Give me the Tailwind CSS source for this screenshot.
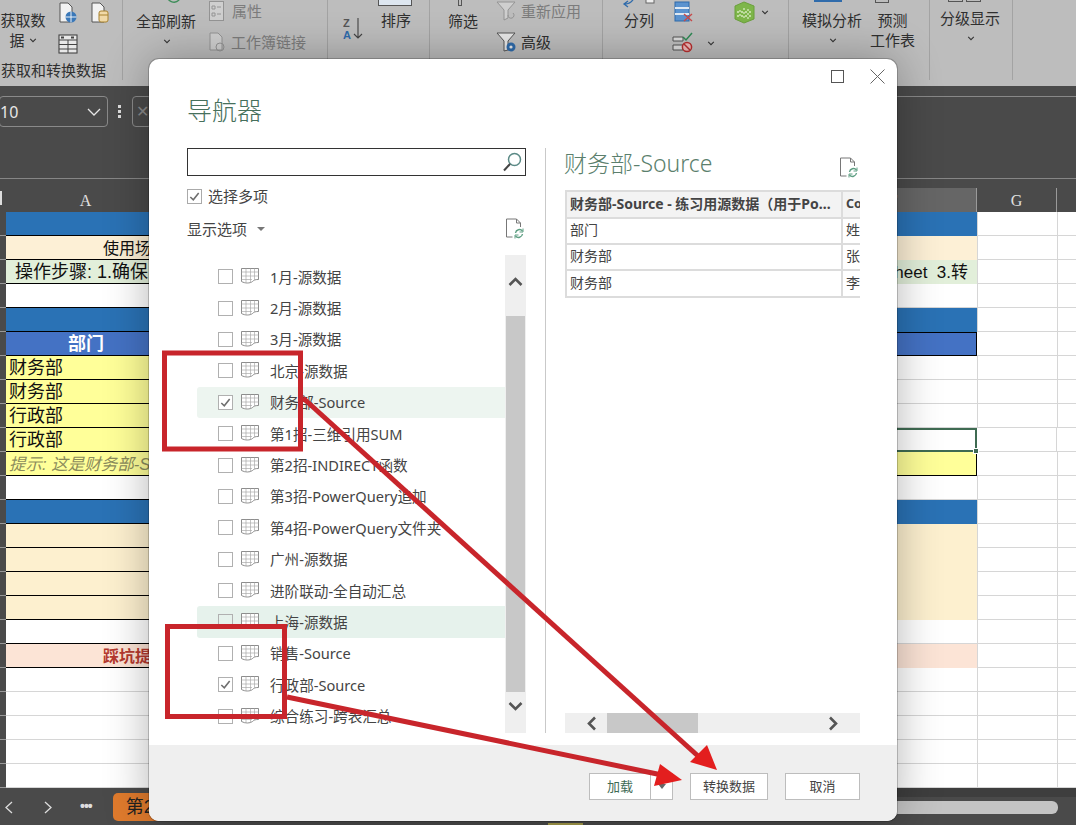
<!DOCTYPE html>
<html lang="zh-CN">
<head>
<meta charset="utf-8">
<title>导航器</title>
<script src="https://cdn.jsdelivr.net/npm/@tailwindcss/browser@4"></script>
</head>
<body class="m-0">
<svg width="0" height="0" class="absolute">
  <defs>
    <symbol id="chev" viewBox="0 0 10 6"><path d="M1.5 1 L5 4.5 L8.5 1" fill="none" stroke="#333" stroke-width="1.3"/></symbol>
    <symbol id="sheet" viewBox="0 0 18 17"><path d="M.5 .5H17.5V11.5C14 11.5 13 12 11.5 13.5C9 15.5 4 15.5 .5 13.5Z" fill="#fff" stroke="#808080" stroke-width=".9"/><path d="M.5 4H17.5M.5 8H17.5M.5 11.5H11M5 .5V14.5M9.5 .5V14.5M13.5 .5V12" fill="none" stroke="#aaa" stroke-width=".7"/></symbol>
    <symbol id="refdoc" viewBox="0 0 20 22"><path d="M12 1H2V19H8M12 1L16 5V9M12 1V5H16" fill="none" stroke="#777" stroke-width="1"/><path d="M11 15a4 4 0 0 1 7-2M18 16a4 4 0 0 1-7 2" fill="none" stroke="#5f9f83" stroke-width="1.4"/><path d="M18.5 10.5V14H15M10.5 20.5V17H14" fill="none" stroke="#5f9f83" stroke-width="1"/></symbol>
    <symbol id="check" viewBox="0 0 14 14"><path d="M2.5 7.5 L5.7 10.5 L11.5 3.2" fill="none" stroke="#6e6e6e" stroke-width="1.7"/></symbol>
    <symbol id="table" viewBox="0 0 20 20"><rect x="1" y="1" width="18" height="18" fill="#e8e8e8" stroke="#444" stroke-width="1.1"/><path d="M1 6H19M1 10.5H19M1 15H19M10 6V19" stroke="#444" stroke-width="1"/><rect x="3" y="2.5" width="3" height="2" fill="#444"/><rect x="13" y="2.5" width="3" height="2" fill="#444"/></symbol>
  </defs>
</svg>

<div class="relative w-[1076px] h-[825px] overflow-hidden bg-[#4a4a4a] font-['Liberation_Sans','Noto_Sans_CJK_SC',sans-serif]">

  <!-- Ribbon -->
  <div class="flex h-[86px] bg-[#bdbdbd] text-[15px] leading-[20px] text-[#2f2f2f] font-['Noto_Sans_CJK_SC',sans-serif] overflow-hidden">
    <div class="w-[123px] h-[80px] shrink-0 border-r border-[#a3a3a3] flex flex-col">
      <div class="flex h-[62px]">
        <div class="w-[46px] pt-[10px] text-center">
          <div class="whitespace-nowrap">获取数</div>
          <div class="flex items-center justify-center gap-1">据<svg class="w-[8px] h-[5px]"><use href="#chev"/></svg></div>
        </div>
        <div class="ml-[12px] pt-[2px] grid grid-cols-[20px_20px] gap-x-[12px] gap-y-[10px] content-start">
          <svg class="w-[20px] h-[22px]" viewBox="0 0 20 22"><path d="M2 1H10L14 5V20H2Z" fill="#f2f2f2" stroke="#555"/><circle cx="13" cy="15" r="5.5" fill="#3b78b8"/><path d="M7.5 15H18.5M13 9.5V20.5" stroke="#fff" stroke-width=".9"/></svg>
          <svg class="w-[20px] h-[22px]" viewBox="0 0 20 22"><path d="M2 1H10L14 5V20H2Z" fill="#f2f2f2" stroke="#555"/><rect x="9" y="9" width="9" height="11" rx="2" fill="#f0d9a8" stroke="#a8822f"/><path d="M9 13H18" stroke="#a8822f"/></svg>
          <svg class="w-[20px] h-[20px]"><use href="#table"/></svg>
        </div>
      </div>
      <div class="pl-[1px] whitespace-nowrap">获取和转换数据</div>
    </div>

    <div class="w-[205px] h-[80px] shrink-0 border-r border-[#a3a3a3] flex">
      <div class="w-[73px] pl-[13px] relative pt-[11px]">
        <svg class="absolute left-[30px] -top-[6px] w-[34px] h-[14px]" viewBox="0 0 34 14"><path d="M12 0V5H6V0" fill="none" stroke="#666"/><path d="M14 1a7 7 0 0 0 12 5M26 6L28 1" fill="none" stroke="#3e8e5a" stroke-width="1.4"/></svg>
        <div class="whitespace-nowrap">全部刷新</div>
        <svg class="w-[8px] h-[5px] mt-[8px] ml-[27px]"><use href="#chev"/></svg>
      </div>
      <div class="pl-[13px] text-[#7c7c7c]">
        <div class="flex items-center gap-[8px] h-[22px]">
          <svg class="w-[15px] h-[20px]" viewBox="0 0 15 20"><rect x=".5" y=".5" width="14" height="19" fill="#cfcfcf" stroke="#949494"/><path d="M3 5H6V8H3ZM3 12H6V15H3ZM8 6H12M8 13H12" stroke="#949494" fill="none"/></svg>
          <span>属性</span>
        </div>
        <div class="flex items-center gap-[4px] h-[20px] mt-[10px] whitespace-nowrap">
          <svg class="w-[18px] h-[20px]" viewBox="0 0 18 20"><path d="M1 1H9L13 5V18H1Z" fill="#cfcfcf" stroke="#949494"/><circle cx="11" cy="15" r="4" fill="none" stroke="#949494"/></svg>
          <span>工作簿链接</span>
        </div>
      </div>
    </div>

    <div class="w-[102px] h-[80px] shrink-0 border-r border-[#a3a3a3] flex">
      <div class="pl-[15px] pt-[17px] w-[53px]">
        <svg class="w-[22px] h-[24px]" viewBox="0 0 22 24">
          <text x="0" y="10" font-size="11" font-weight="700" fill="#555" font-family="Liberation Sans">Z</text>
          <text x="0" y="22" font-size="11" font-weight="700" fill="#2f6bab" font-family="Liberation Sans">A</text>
          <path d="M15 1V21M11 17L15 21L19 17" fill="none" stroke="#444" stroke-width="1.1"/>
        </svg>
      </div>
      <div class="relative pt-[10px]">
        <div class="absolute -top-[5px] -left-[3px] w-[34px] h-[11px] border border-[#555] bg-[#dde6f0]"></div>
        <div class="whitespace-nowrap">排序</div>
      </div>
    </div>

    <div class="w-[173px] h-[80px] shrink-0 border-r border-[#a3a3a3] flex">
      <div class="pl-[18px] pt-[11px] w-[66px] relative">
        <div class="absolute left-[28px] -top-[4px] w-[4px] h-[10px] border border-[#555]"></div>
        <div class="whitespace-nowrap">筛选</div>
      </div>
      <div class="text-[#7c7c7c]">
        <div class="flex items-center h-[22px] gap-[5px] whitespace-nowrap">
          <svg class="w-[20px] h-[22px]" viewBox="0 0 20 22"><path d="M1 2H19L12 10V18L8 20V10Z" fill="#cfcfcf" stroke="#949494"/><path d="M12 15a3 3 0 1 0 5-2" fill="none" stroke="#949494"/></svg>
          <span>重新应用</span>
        </div>
        <div class="flex items-center h-[22px] mt-[9px] gap-[5px] text-[#2f2f2f]">
          <svg class="w-[20px] h-[22px]" viewBox="0 0 20 22"><path d="M1 2H19L12 10V19L8 20V10Z" fill="#e8e8e8" stroke="#555"/><circle cx="15" cy="16" r="4.5" fill="#2f6bab"/><circle cx="15" cy="16" r="1.6" fill="#e8e8e8"/></svg>
          <span>高级</span>
        </div>
      </div>
    </div>

    <div class="w-[186px] h-[80px] shrink-0 border-r border-[#a3a3a3] flex">
      <div class="pl-[21px] pt-[10px] w-[71px] relative">
        <svg class="absolute left-[17px] -top-[2px] w-[38px] h-[12px]" viewBox="0 0 38 12"><path d="M14 0C12 4 10 6 5 6M8 3L4 6L8 9" fill="none" stroke="#2f6bab" stroke-width="1.3"/><rect x="26" y="-4" width="8" height="9" fill="#eee" stroke="#666"/></svg>
        <div class="whitespace-nowrap">分列</div>
      </div>
      <div class="pt-[1px] w-[60px]">
        <svg class="w-[20px] h-[22px]" viewBox="0 0 20 22"><rect x="1" y="1" width="14" height="19" fill="#5b93cf" stroke="#2f6bab"/><path d="M1 7H15M1 13H15" stroke="#dfe9f3" stroke-width="2"/><path d="M10 13L18 20M18 13L10 20" stroke="#c84a4a" stroke-width="1.4"/></svg>
        <div class="flex items-center mt-[9px] -ml-[2px] gap-[13px]">
          <svg class="w-[22px] h-[22px] shrink-0" viewBox="0 0 22 22"><path d="M1 5H11V9H1ZM1 13H11V18H1Z" fill="#ddd" stroke="#555"/><path d="M11 5L14 8L20 1" fill="none" stroke="#2f8a55" stroke-width="1.5"/><circle cx="15" cy="15" r="4.6" fill="#f0b9b9" stroke="#b83030" stroke-width="1.5"/><path d="M12 12L18 18" stroke="#b83030" stroke-width="1.5"/></svg>
          <svg class="w-[8px] h-[5px] shrink-0"><use href="#chev"/></svg>
        </div>
      </div>
      <div class="pt-[1px] flex items-start gap-[6px]">
        <svg class="w-[21px] h-[23px] shrink-0" viewBox="0 0 21 23"><path d="M1 5L10 1L20 5V18L10 22L1 18Z" fill="#7eb64a" stroke="#6ba03c"/><path d="M10 7V19M14 8V18M6 9V16M3 11H18M3 15H18" stroke="#d7eabf" stroke-width="1.3" stroke-dasharray="2 2"/></svg>
        <svg class="w-[8px] h-[5px] mt-[9px] shrink-0"><use href="#chev"/></svg>
      </div>
    </div>

    <div class="w-[141px] h-[80px] shrink-0 border-r border-[#a3a3a3] flex">
      <div class="pl-[13px] pt-[10px] w-[81px] relative">
        <div class="absolute left-[25px] -top-[2px] w-[28px] h-[4px] bg-[#2f6bab]"></div>
        <div class="whitespace-nowrap">模拟分析</div>
        <svg class="w-[8px] h-[5px] mt-[8px] ml-[27px]"><use href="#chev"/></svg>
      </div>
      <div class="text-center pt-[10px] w-[45px] relative">
        <div class="absolute left-[5px] -top-[5px] w-[14px] h-[8px] border border-[#555]"></div>
        <div>预测</div>
        <div class="whitespace-nowrap">工作表</div>
      </div>
    </div>

    <div class="w-[83px] h-[80px] shrink-0 border-r border-[#a3a3a3] relative">
      <div class="absolute left-[18px] -top-[5px] flex gap-[3px]"><div class="w-[15px] h-[7px] border border-[#555]"></div><div class="w-[15px] h-[7px] border border-[#555]"></div></div>
      <div class="pl-[10px] pt-[8px] whitespace-nowrap">分级显示</div>
      <svg class="w-[8px] h-[5px] mt-[8px] ml-[37px]"><use href="#chev"/></svg>
    </div>
  </div>

  <!-- Formula bar -->
  <div class="h-[102px] pt-[10px] relative">
    <div class="flex items-center h-[31px]">
      <div class="w-[109px] h-[31px] -ml-[1px] flex items-center justify-between pr-[6px] border border-[#8a8a8a] rounded-[4px] text-[#e6e6e6] text-[16px] font-['Noto_Sans',sans-serif]">
        <span>10</span>
        <svg class="w-[14px] h-[8px]" viewBox="0 0 14 8"><path d="M1 1L7 7L13 1" fill="none" stroke="#e6e6e6" stroke-width="1.3"/></svg>
      </div>
      <div class="ml-[10px] flex flex-col gap-[2px]"><i class="w-[3px] h-[3px] bg-[#ddd]"></i><i class="w-[3px] h-[3px] bg-[#ddd]"></i><i class="w-[3px] h-[3px] bg-[#ddd]"></i></div>
      <div class="ml-[11px] w-[20px] h-[31px] border border-[#8a8a8a] rounded-[4px] flex items-center justify-center text-[#8a8a8a]">✕</div>
      <div class="ml-[742px] flex-1 h-[31px] border-t border-[#888]"></div>
    </div>
    <div class="mt-[51px] h-[1px] bg-[#868686]"></div>
  </div>

  <!-- Column headers -->
  <div class="flex h-[24px] text-[#e0e0e0] text-[16px] font-['Liberation_Serif',serif]">
    <div class="w-[6px] h-[24px] bg-[#4a4a4a] relative"><div class="absolute left-0 top-[3px] w-[2px] h-[14px] bg-[#ddd]"></div></div>
    <div class="w-[160px] text-center border-r border-[#777] leading-[26px]">A</div>
    <div class="w-[644px]"></div>
    <div class="w-[167px] bg-[#666] border-r border-[#9a9a9a] text-center leading-[26px]">F</div>
    <div class="w-[80px] border-r border-[#9a9a9a] text-center leading-[26px]">G</div>
    <div class="flex-1"></div>
  </div>

  <!-- Grid -->
  <div class="bg-white text-[16px] leading-[25px] text-[#111]">
    <div class="flex h-[24px]"><div class="w-[6px] bg-[#4a4a4a] border-b border-[#999]"></div><div class="w-[400px] bg-[#2a72b5] border-b border-black"></div><div class="w-[571px] bg-[#2a72b5]"></div><div class="w-[80px] border-l border-b border-[#d6d6d6]"></div><div class="flex-1 border-l border-b border-[#d6d6d6]"></div></div>

    <div class="flex h-[24px]"><div class="w-[6px] bg-[#4a4a4a] border-b border-[#999]"></div><div class="w-[400px] bg-[#fdf0d6] border-b border-black pl-[97px] whitespace-nowrap overflow-hidden">使用场景</div><div class="w-[571px] bg-[#fdf0d6]"></div><div class="w-[80px] border-l border-b border-[#d6d6d6]"></div><div class="flex-1 border-l border-b border-[#d6d6d6]"></div></div>

    <div class="flex h-[24px]"><div class="w-[6px] bg-[#4a4a4a] border-b border-[#999]"></div><div class="w-[400px] bg-[#e2efda] border-b border-black pl-[9px] text-[18px] whitespace-nowrap overflow-hidden">操作步骤: 1.确保</div><div class="w-[571px] bg-[#e2efda] text-right pr-[9px] text-[17px] whitespace-pre">Sheet  3.转</div><div class="w-[80px] border-l border-b border-[#d6d6d6]"></div><div class="flex-1 border-l border-b border-[#d6d6d6]"></div></div>

    <div class="flex h-[24px]"><div class="w-[6px] bg-[#4a4a4a] border-b border-[#999]"></div><div class="w-[400px] border-b border-black"></div><div class="w-[571px] border-b border-[#d6d6d6]"></div><div class="w-[80px] border-l border-b border-[#d6d6d6]"></div><div class="flex-1 border-l border-b border-[#d6d6d6]"></div></div>

    <div class="flex h-[24px]"><div class="w-[6px] bg-[#4a4a4a] border-b border-[#999]"></div><div class="w-[400px] bg-[#2a72b5] border-b border-black"></div><div class="w-[571px] bg-[#2a72b5]"></div><div class="w-[80px] border-l border-b border-[#d6d6d6]"></div><div class="flex-1 border-l border-b border-[#d6d6d6]"></div></div>

    <div class="flex h-[24px]"><div class="w-[6px] bg-[#4a4a4a] border-b border-[#999]"></div><div class="w-[400px] bg-[#4472c4] border-b border-black text-white text-[18px] font-bold pl-[62px]">部门</div><div class="w-[571px] bg-[#4472c4] border-y border-r border-black"></div><div class="w-[80px] border-b border-[#d6d6d6]"></div><div class="flex-1 border-l border-b border-[#d6d6d6]"></div></div>

    <div class="flex h-[24px]"><div class="w-[6px] bg-[#4a4a4a] border-b border-[#999]"></div><div class="w-[400px] bg-[#ffff99] border-b border-black pl-[3px] text-[18px]">财务部</div><div class="w-[571px] border-b border-[#d6d6d6]"></div><div class="w-[80px] border-l border-b border-[#d6d6d6]"></div><div class="flex-1 border-l border-b border-[#d6d6d6]"></div></div>

    <div class="flex h-[24px]"><div class="w-[6px] bg-[#4a4a4a] border-b border-[#999]"></div><div class="w-[400px] bg-[#ffff99] border-b border-black pl-[3px] text-[18px]">财务部</div><div class="w-[571px] border-b border-[#d6d6d6]"></div><div class="w-[80px] border-l border-b border-[#d6d6d6]"></div><div class="flex-1 border-l border-b border-[#d6d6d6]"></div></div>

    <div class="flex h-[24px]"><div class="w-[6px] bg-[#4a4a4a] border-b border-[#999]"></div><div class="w-[400px] bg-[#ffff99] border-b border-black pl-[3px] text-[18px]">行政部</div><div class="w-[571px] border-b border-[#d6d6d6]"></div><div class="w-[80px] border-l border-b border-[#d6d6d6]"></div><div class="flex-1 border-l border-b border-[#d6d6d6]"></div></div>

    <div class="flex h-[24px]"><div class="w-[6px] bg-[#4a4a4a] border-b border-[#999]"></div><div class="w-[400px] bg-[#ffff99] border-b border-black pl-[3px] text-[18px]">行政部</div><div class="relative w-[571px] border-y-2 border-r-2 border-[#3f6b52] -mr-[1px]"><div class="absolute -right-[4px] -bottom-[4px] w-[6px] h-[6px] bg-[#3f6b52] border border-white"></div></div><div class="w-[80px] border-b border-[#d6d6d6]"></div><div class="flex-1 border-l border-b border-[#d6d6d6]"></div></div>

    <div class="flex h-[24px]"><div class="w-[6px] bg-[#4a4a4a] border-b border-[#999]"></div><div class="w-[400px] bg-[#ffff99] border-b border-black pl-[3px] italic text-[#8c8c5c] text-[16.5px] whitespace-nowrap overflow-hidden">提示: 这是财务部-Source</div><div class="w-[571px] bg-[#ffff99] border-b border-r border-black"></div><div class="w-[80px] border-b border-[#d6d6d6]"></div><div class="flex-1 border-l border-b border-[#d6d6d6]"></div></div>

    <div class="flex h-[24px]"><div class="w-[6px] bg-[#4a4a4a] border-b border-[#999]"></div><div class="w-[400px] border-b border-black"></div><div class="w-[571px] border-b border-[#d6d6d6]"></div><div class="w-[80px] border-l border-b border-[#d6d6d6]"></div><div class="flex-1 border-l border-b border-[#d6d6d6]"></div></div>

    <div class="flex h-[24px]"><div class="w-[6px] bg-[#4a4a4a] border-b border-[#999]"></div><div class="w-[400px] bg-[#2a72b5] border-b border-black"></div><div class="w-[571px] bg-[#2a72b5]"></div><div class="w-[80px] border-l border-b border-[#d6d6d6]"></div><div class="flex-1 border-l border-b border-[#d6d6d6]"></div></div>

    <div class="flex h-[24px]"><div class="w-[6px] bg-[#4a4a4a] border-b border-[#999]"></div><div class="w-[400px] bg-[#fdf0cf] border-b border-black"></div><div class="w-[571px] bg-[#fdf0cf]"></div><div class="w-[80px] border-l border-b border-[#d6d6d6]"></div><div class="flex-1 border-l border-b border-[#d6d6d6]"></div></div>
    <div class="flex h-[24px]"><div class="w-[6px] bg-[#4a4a4a] border-b border-[#999]"></div><div class="w-[400px] bg-[#fdf0cf] border-b border-black"></div><div class="w-[571px] bg-[#fdf0cf]"></div><div class="w-[80px] border-l border-b border-[#d6d6d6]"></div><div class="flex-1 border-l border-b border-[#d6d6d6]"></div></div>
    <div class="flex h-[24px]"><div class="w-[6px] bg-[#4a4a4a] border-b border-[#999]"></div><div class="w-[400px] bg-[#fdf0cf] border-b border-black"></div><div class="w-[571px] bg-[#fdf0cf]"></div><div class="w-[80px] border-l border-b border-[#d6d6d6]"></div><div class="flex-1 border-l border-b border-[#d6d6d6]"></div></div>
    <div class="flex h-[24px]"><div class="w-[6px] bg-[#4a4a4a] border-b border-[#999]"></div><div class="w-[400px] bg-[#fdf0cf] border-b border-black"></div><div class="w-[571px] bg-[#fdf0cf]"></div><div class="w-[80px] border-l border-b border-[#d6d6d6]"></div><div class="flex-1 border-l border-b border-[#d6d6d6]"></div></div>

    <div class="flex h-[24px]"><div class="w-[6px] bg-[#4a4a4a] border-b border-[#999]"></div><div class="w-[400px] border-b border-black"></div><div class="w-[571px] border-b border-[#d6d6d6]"></div><div class="w-[80px] border-l border-b border-[#d6d6d6]"></div><div class="flex-1 border-l border-b border-[#d6d6d6]"></div></div>

    <div class="flex h-[24px]"><div class="w-[6px] bg-[#4a4a4a] border-b border-[#999]"></div><div class="w-[400px] bg-[#fce4d6] border-b border-black pl-[97px] font-bold text-[#b5392f] whitespace-nowrap overflow-hidden">踩坑提示</div><div class="w-[571px] bg-[#fce4d6]"></div><div class="w-[80px] border-l border-b border-[#d6d6d6]"></div><div class="flex-1 border-l border-b border-[#d6d6d6]"></div></div>

    <div class="flex h-[24px]"><div class="w-[6px] bg-[#4a4a4a] border-b border-[#999]"></div><div class="w-[971px] border-b border-[#d6d6d6]"></div><div class="w-[80px] border-l border-b border-[#d6d6d6]"></div><div class="flex-1 border-l border-b border-[#d6d6d6]"></div></div>
    <div class="flex h-[24px]"><div class="w-[6px] bg-[#4a4a4a] border-b border-[#999]"></div><div class="w-[971px] border-b border-[#d6d6d6]"></div><div class="w-[80px] border-l border-b border-[#d6d6d6]"></div><div class="flex-1 border-l border-b border-[#d6d6d6]"></div></div>
    <div class="flex h-[24px]"><div class="w-[6px] bg-[#4a4a4a] border-b border-[#999]"></div><div class="w-[971px] border-b border-[#d6d6d6]"></div><div class="w-[80px] border-l border-b border-[#d6d6d6]"></div><div class="flex-1 border-l border-b border-[#d6d6d6]"></div></div>
    <div class="flex h-[24px]"><div class="w-[6px] bg-[#4a4a4a] border-b border-[#999]"></div><div class="w-[971px] border-b border-[#d6d6d6]"></div><div class="w-[80px] border-l border-b border-[#d6d6d6]"></div><div class="flex-1 border-l border-b border-[#d6d6d6]"></div></div>
    <div class="flex h-[24px]"><div class="w-[6px] bg-[#4a4a4a] border-b border-[#999]"></div><div class="w-[971px] border-b border-[#d6d6d6]"></div><div class="w-[80px] border-l border-b border-[#d6d6d6]"></div><div class="flex-1 border-l border-b border-[#d6d6d6]"></div></div>
  </div>

  <!-- Sheet tabs -->
  <div class="h-[37px] flex items-start text-[#ddd]">
    <div class="w-[897px] h-[37px] flex items-start shrink-0">
      <svg class="mt-[13px] ml-[4px] w-[9px] h-[13px]" viewBox="0 0 9 13"><path d="M8 1L2 6.5L8 12" fill="none" stroke="#ddd" stroke-width="1.3"/></svg>
      <svg class="mt-[13px] ml-[31px] w-[9px] h-[13px]" viewBox="0 0 9 13"><path d="M1 1L7 6.5L1 12" fill="none" stroke="#ddd" stroke-width="1.3"/></svg>
      <div class="ml-[27px] mt-[8px] text-[14px] tracking-[-1px] font-bold">•••</div>
      <div class="ml-[21px] mt-[5px] w-[60px] h-[28px] rounded-[5px] bg-[#e07b2d] text-[#222] text-[18px] pl-[13px] leading-[28px] whitespace-nowrap">第2招</div>
      <div class="ml-auto mr-[314px] mt-[35px] w-[35px] h-[2px] bg-[#a59c4a]"></div>
    </div>
    <div class="flex-1 h-[37px]">
      <div class="h-[9px] bg-[#3e3e3e]"></div>
      <div class="mt-[4px] w-[161px] h-[13px] rounded-r-[6px] bg-[#c4c4c4]"></div>
    </div>
  </div>

  <!-- Navigator dialog -->
  <div class="absolute left-[149px] top-[59px] w-[748px] h-[762px] rounded-[10px] overflow-hidden bg-white flex flex-col shadow-[0_0_45px_rgba(0,0,0,0.3)] ring-1 ring-black/20 font-['Noto_Sans','Noto_Sans_CJK_SC',sans-serif] text-[#444]">
    <div class="relative flex-1 flex pl-[38px]">
      <div class="absolute right-[12px] top-[10px] flex items-center gap-[26px]">
        <div class="w-[13px] h-[13px] border border-[#555]"></div>
        <svg class="w-[15px] h-[15px]" viewBox="0 0 15 15"><path d="M.5 .5L14.5 14.5M14.5 .5L.5 14.5" stroke="#666" stroke-width="1"/></svg>
      </div>

      <!-- Left pane -->
      <div class="w-[339px] shrink-0 pt-[34px]">
        <div class="text-[25px] leading-[34px] font-light text-[#46705c]">导航器</div>
        <div class="mt-[21px] h-[28px] border border-[#333] flex items-center justify-end pr-[2px]">
          <svg class="w-[22px] h-[22px]" viewBox="0 0 22 22"><circle cx="13.5" cy="8.5" r="6" fill="none" stroke="#5b8a86" stroke-width="1.5"/><path d="M9 13L3 19.5" stroke="#444" stroke-width="2"/></svg>
        </div>
        <div class="mt-[10px] h-[20px] flex items-center gap-[6px] text-[15px]">
          <div class="w-[15px] h-[15px] border border-[#aaa]"><svg class="w-[13px] h-[13px]"><use href="#check"/></svg></div>
          <span>选择多项</span>
        </div>
        <div class="mt-[13px] h-[20px] flex items-center text-[15px]">
          <span>显示选项</span>
          <span class="ml-[10px] w-0 h-0 border-x-[4px] border-x-transparent border-t-[4px] border-t-[#777]"></span>
          <svg class="ml-auto mr-[1px] w-[21px] h-[22px]"><use href="#refdoc"/></svg>
        </div>

        <div class="mt-[16px] h-[478px] flex text-[14.6px] leading-[20px]">
          <div class="w-[318px] pl-[10px] pt-[6px] overflow-hidden">
            <div class="h-[31.4px] flex items-center pl-[21px]"><div class="w-[15px] h-[15px] bg-white border border-[#b0b0b0] shrink-0"></div><svg class="ml-[8px] w-[18px] h-[17px] shrink-0"><use href="#sheet"/></svg><span class="ml-[11px] whitespace-nowrap">1月-源数据</span></div>
            <div class="h-[31.4px] flex items-center pl-[21px]"><div class="w-[15px] h-[15px] bg-white border border-[#b0b0b0] shrink-0"></div><svg class="ml-[8px] w-[18px] h-[17px] shrink-0"><use href="#sheet"/></svg><span class="ml-[11px] whitespace-nowrap">2月-源数据</span></div>
            <div class="h-[31.4px] flex items-center pl-[21px]"><div class="w-[15px] h-[15px] bg-white border border-[#b0b0b0] shrink-0"></div><svg class="ml-[8px] w-[18px] h-[17px] shrink-0"><use href="#sheet"/></svg><span class="ml-[11px] whitespace-nowrap">3月-源数据</span></div>
            <div class="h-[31.4px] flex items-center pl-[21px]"><div class="w-[15px] h-[15px] bg-white border border-[#b0b0b0] shrink-0"></div><svg class="ml-[8px] w-[18px] h-[17px] shrink-0"><use href="#sheet"/></svg><span class="ml-[11px] whitespace-nowrap">北京-源数据</span></div>
            <div class="h-[31.4px] flex items-center pl-[21px] bg-[#edf5f0] rounded-l-[3px]"><div class="w-[15px] h-[15px] bg-white border border-[#b0b0b0] shrink-0"><svg class="w-[13px] h-[13px]"><use href="#check"/></svg></div><svg class="ml-[8px] w-[18px] h-[17px] shrink-0"><use href="#sheet"/></svg><span class="ml-[11px] whitespace-nowrap">财务部-Source</span></div>
            <div class="h-[31.4px] flex items-center pl-[21px]"><div class="w-[15px] h-[15px] bg-white border border-[#b0b0b0] shrink-0"></div><svg class="ml-[8px] w-[18px] h-[17px] shrink-0"><use href="#sheet"/></svg><span class="ml-[11px] whitespace-nowrap">第1招-三维引用SUM</span></div>
            <div class="h-[31.4px] flex items-center pl-[21px]"><div class="w-[15px] h-[15px] bg-white border border-[#b0b0b0] shrink-0"></div><svg class="ml-[8px] w-[18px] h-[17px] shrink-0"><use href="#sheet"/></svg><span class="ml-[11px] whitespace-nowrap">第2招-INDIRECT函数</span></div>
            <div class="h-[31.4px] flex items-center pl-[21px]"><div class="w-[15px] h-[15px] bg-white border border-[#b0b0b0] shrink-0"></div><svg class="ml-[8px] w-[18px] h-[17px] shrink-0"><use href="#sheet"/></svg><span class="ml-[11px] whitespace-nowrap">第3招-PowerQuery追加</span></div>
            <div class="h-[31.4px] flex items-center pl-[21px]"><div class="w-[15px] h-[15px] bg-white border border-[#b0b0b0] shrink-0"></div><svg class="ml-[8px] w-[18px] h-[17px] shrink-0"><use href="#sheet"/></svg><span class="ml-[11px] whitespace-nowrap">第4招-PowerQuery文件夹</span></div>
            <div class="h-[31.4px] flex items-center pl-[21px]"><div class="w-[15px] h-[15px] bg-white border border-[#b0b0b0] shrink-0"></div><svg class="ml-[8px] w-[18px] h-[17px] shrink-0"><use href="#sheet"/></svg><span class="ml-[11px] whitespace-nowrap">广州-源数据</span></div>
            <div class="h-[31.4px] flex items-center pl-[21px]"><div class="w-[15px] h-[15px] bg-white border border-[#b0b0b0] shrink-0"></div><svg class="ml-[8px] w-[18px] h-[17px] shrink-0"><use href="#sheet"/></svg><span class="ml-[11px] whitespace-nowrap">进阶联动-全自动汇总</span></div>
            <div class="h-[31.4px] flex items-center pl-[21px] bg-[#e6f2ec] rounded-l-[3px]"><div class="w-[15px] h-[15px] border border-[#b0b0b0] shrink-0"></div><svg class="ml-[8px] w-[18px] h-[17px] shrink-0"><use href="#sheet"/></svg><span class="ml-[11px] whitespace-nowrap">上海-源数据</span></div>
            <div class="h-[31.4px] flex items-center pl-[21px]"><div class="w-[15px] h-[15px] bg-white border border-[#b0b0b0] shrink-0"></div><svg class="ml-[8px] w-[18px] h-[17px] shrink-0"><use href="#sheet"/></svg><span class="ml-[11px] whitespace-nowrap">销售-Source</span></div>
            <div class="h-[31.4px] flex items-center pl-[21px]"><div class="w-[15px] h-[15px] bg-white border border-[#b0b0b0] shrink-0"><svg class="w-[13px] h-[13px]"><use href="#check"/></svg></div><svg class="ml-[8px] w-[18px] h-[17px] shrink-0"><use href="#sheet"/></svg><span class="ml-[11px] whitespace-nowrap">行政部-Source</span></div>
            <div class="h-[31.4px] flex items-center pl-[21px]"><div class="w-[15px] h-[15px] bg-white border border-[#b0b0b0] shrink-0"></div><svg class="ml-[8px] w-[18px] h-[17px] shrink-0"><use href="#sheet"/></svg><span class="ml-[11px] whitespace-nowrap">综合练习-跨表汇总</span></div>
          </div>
          <div class="w-[21px] bg-[#efefef] flex flex-col items-center">
            <svg class="mt-[21px] w-[15px] h-[11px]" viewBox="0 0 15 11"><path d="M1.5 9L7.5 3L13.5 9" fill="none" stroke="#555" stroke-width="2.6"/></svg>
            <div class="mt-[29px] w-[19px] h-[376px] bg-[#c8c8c8]"></div>
            <svg class="mt-[9px] w-[15px] h-[11px]" viewBox="0 0 15 11"><path d="M1.5 2L7.5 8L13.5 2" fill="none" stroke="#555" stroke-width="2.6"/></svg>
          </div>
        </div>
      </div>

      <!-- Divider -->
      <div class="ml-[19px] mt-[89px] w-[1px] h-[585px] bg-[#c9c9c9] shrink-0"></div>

      <!-- Right pane -->
      <div class="ml-[18px] w-[297px] mt-[88px] h-[586px] flex flex-col">
        <div class="h-[33px] flex items-center justify-between">
          <span class="text-[23px] leading-[33px] font-light text-[#5b7f6d]">财务部-Source</span>
          <svg class="mr-[2px] mt-[9px] w-[21px] h-[22px]"><use href="#refdoc"/></svg>
        </div>
        <div class="mt-[10px] w-[295px] ml-[1px] overflow-hidden">
          <table class="w-[295px] table-fixed border-collapse text-[14px] leading-[18px] text-[#444]">
            <colgroup><col class="w-[276px]"><col class="w-[19px]"></colgroup>
            <tr class="h-[27px] bg-[#f3f3f3] font-bold"><td class="border-2 border-r-2 border-[#dcdcdc] pl-[3px] pb-[2px] whitespace-nowrap overflow-hidden">财务部-Source - 练习用源数据（用于Po...</td><td class="border-y-2 border-[#dcdcdc] pl-[3px] pb-[2px] text-[12.5px] whitespace-nowrap">Co</td></tr>
            <tr class="h-[26px]"><td class="border-2 border-[#dcdcdc] pl-[3px] pb-[2px]">部门</td><td class="border-y-2 border-[#dcdcdc] pl-[3px] pb-[2px]">姓</td></tr>
            <tr class="h-[26px]"><td class="border-2 border-[#dcdcdc] pl-[3px] pb-[2px]">财务部</td><td class="border-y-2 border-[#dcdcdc] pl-[3px] pb-[2px]">张</td></tr>
            <tr class="h-[27px]"><td class="border-2 border-[#dcdcdc] pl-[3px] pb-[2px]">财务部</td><td class="border-y-2 border-[#dcdcdc] pl-[3px] pb-[2px]">李</td></tr>
          </table>
        </div>
        <div class="mt-auto h-[20px] w-[295px] ml-[1px] bg-[#efefef] flex items-center">
          <svg class="ml-[21px] w-[11px] h-[15px]" viewBox="0 0 11 15"><path d="M9 1.5L3 7.5L9 13.5" fill="none" stroke="#555" stroke-width="2.6"/></svg>
          <div class="ml-[10px] w-[91px] h-[20px] bg-[#c8c8c8]"></div>
          <svg class="ml-[130px] w-[11px] h-[15px]" viewBox="0 0 11 15"><path d="M2 1.5L8 7.5L2 13.5" fill="none" stroke="#555" stroke-width="2.6"/></svg>
        </div>
      </div>
    </div>

    <!-- Footer -->
    <div class="h-[76px] shrink-0 bg-[#efefef] flex justify-end pr-[37px] pt-[28px] gap-[17px] text-[13px]">
      <div class="flex h-[27px] bg-white border border-[#bdbdbd]">
        <div class="w-[61px] text-center leading-[25px] text-[#3f6b55] border-r border-[#bdbdbd]">加载</div>
        <div class="w-[21px] flex items-center justify-center"><span class="w-0 h-0 border-x-[4px] border-x-transparent border-t-[5px] border-t-[#666]"></span></div>
      </div>
      <div class="w-[78px] h-[27px] bg-white border border-[#bdbdbd] text-center leading-[25px]">转换数据</div>
      <div class="w-[75px] h-[27px] bg-white border border-[#bdbdbd] text-center leading-[25px]">取消</div>
    </div>
  </div>

  <!-- Red annotations -->
  <svg class="absolute left-0 top-0 w-[1076px] h-[825px] pointer-events-none" viewBox="0 0 1076 825">
    <rect x="164.5" y="353" width="136" height="96" fill="none" stroke="#c8252b" stroke-width="5"/>
    <rect x="167.5" y="626.5" width="117" height="90" fill="none" stroke="#c8252b" stroke-width="5"/>
    <path d="M303 398L698 756" stroke="#c8252b" stroke-width="5"/>
    <path d="M287 697L662 775" stroke="#c8252b" stroke-width="5"/>
    <polygon points="690,762 707,745 717,770" fill="#e31e1e"/>
    <polygon points="654,786 660,764 682,780" fill="#e31e1e"/>
  </svg>
</div>
</body>
</html>
